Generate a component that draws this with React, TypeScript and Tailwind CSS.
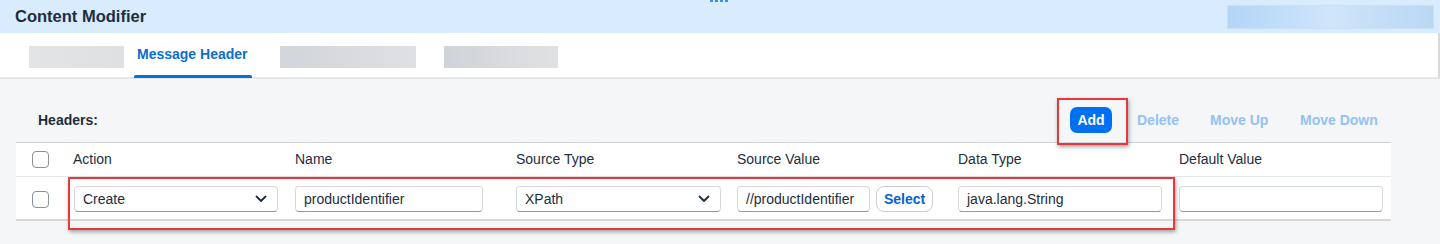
import React from "react";

function Chevron() {
  return (
    <svg width="12" height="8" viewBox="0 0 12 8" className="shrink-0">
      <path d="M1.5 1.5 L6 6 L10.5 1.5" fill="none" stroke="#1d2d3e" strokeWidth="1.8" strokeLinecap="round" strokeLinejoin="round" />
    </svg>
  );
}

function Checkbox() {
  return <div className="w-[17px] h-[17px] rounded-[4px] border border-[#89919a] bg-white" />;
}

function Field({ w, text, select }: { w: string; text?: string; select?: boolean }) {
  return (
    <div
      className={`${w} h-[26px] rounded-[4px] border border-[#d5dadd] border-b-[#8c99a6] bg-white flex items-center justify-between pl-[8px] pr-[10px] text-[14px] text-[#1d2d3e] whitespace-nowrap overflow-hidden`}
    >
      <span>{text}</span>
      {select && <Chevron />}
    </div>
  );
}

export default function App() {
  const cols = "grid grid-cols-[52px_221px_221px_221px_221px_221px_1fr]";
  return (
    <div className="relative w-[1440px] h-[244px] overflow-hidden bg-[#f5f6f7] font-['Liberation_Sans',Arial,sans-serif] text-[#1d2d3e]">
      {/* Title bar */}
      <div className="relative h-[33px] bg-[#d9ecfe] flex items-center justify-between pl-[15px] pr-[6px]">
        <span className="text-[16.5px] font-bold text-[#1d2d3e]">Content Modifier</span>
        <div className="absolute top-0 left-[710px] flex gap-[2px]">
          <div className="w-[3px] h-[2px] bg-[#3b8fe8]" />
          <div className="w-[3px] h-[2px] bg-[#3b8fe8]" />
          <div className="w-[3px] h-[2px] bg-[#3b8fe8]" />
          <div className="w-[3px] h-[2px] bg-[#3b8fe8]" />
        </div>
        <div className="w-[207px] h-[24px] bg-gradient-to-r from-[#b3d5f6] via-[#cfe5fa] to-[#bad7f2] border border-[#c6e0f8]" />
      </div>

      {/* Tabs */}
      <div className="h-[46px] bg-white border-b-2 border-[#e4e6e8] border-r-2 border-r-[#d8dadc] flex items-stretch">
        <div className="ml-[29px] mt-[13px] w-[95px] h-[22px] bg-gradient-to-r from-[#e3e4e6] to-[#dfe0e2]" />
        <div className="relative ml-[10px] w-[118px] flex items-center pl-[3px] pb-[2px]">
          <span className="text-[14px] font-bold text-[#0a6ed1] whitespace-nowrap">Message Header</span>
          <div className="absolute left-0 right-0 bottom-[-1px] h-[3px] rounded-t-[2px] bg-[#0a6ed1]" />
        </div>
        <div className="ml-[28px] mt-[13px] w-[136px] h-[22px] bg-gradient-to-r from-[#d2d5d9] to-[#dfe0e3]" />
        <div className="ml-[28px] mt-[13px] w-[114px] h-[22px] bg-gradient-to-r from-[#d0d3d7] to-[#e0e1e3]" />
      </div>

      {/* Toolbar */}
      <div className="ml-[16px] w-[1375px] mt-[28px] h-[26px] flex items-center justify-between pl-[22px] pr-[16px]">
        <span className="text-[14px] font-bold">Headers:</span>
        <div className="flex items-center">
          <div className="w-[42px] h-[26px] rounded-[7px] bg-[#0070f2] text-white text-[14px] font-bold flex items-center justify-center">Add</div>
          <span className="ml-[25px] w-[40px] whitespace-nowrap text-[14px] font-bold text-[#93c2f6]">Delete</span>
          <span className="ml-[33px] w-[57px] whitespace-nowrap text-[14px] font-bold text-[#93c2f6]">Move Up</span>
          <span className="ml-[33px] w-[75px] whitespace-nowrap text-[14px] font-bold text-[#93c2f6]">Move Down</span>
        </div>
      </div>

      {/* Table */}
      <div className="ml-[16px] mt-[9px] w-[1375px] bg-white border-t border-[#d1d5d9] border-b-2 border-b-[#d5d9dc]">
        <div className={`${cols} h-[34px] items-center border-b border-[#e5e7e9] text-[14px]`}>
          <div className="pl-[16px] flex items-center"><Checkbox /></div>
          <div className="pl-[5px]">Action</div>
          <div className="pl-[6px]">Name</div>
          <div className="pl-[6px]">Source Type</div>
          <div className="pl-[6px]">Source Value</div>
          <div className="pl-[6px]">Data Type</div>
          <div className="pl-[6px]">Default Value</div>
        </div>
        <div className={`${cols} h-[42px] items-center pt-[2px]`}>
          <div className="pl-[16px] flex items-center"><Checkbox /></div>
          <div className="pl-[6px]"><Field w="w-[204px]" text="Create" select /></div>
          <div className="pl-[6px]"><Field w="w-[188px]" text="productIdentifier" /></div>
          <div className="pl-[6px]"><Field w="w-[205px]" text="XPath" select /></div>
          <div className="pl-[6px] flex items-center gap-[6px]">
            <Field w="w-[133px]" text="//productIdentifier" />
            <div className="w-[57px] h-[26px] rounded-[8px] border border-[#c9ced3] bg-white flex items-center justify-center text-[14px] font-bold text-[#0064d9]">Select</div>
          </div>
          <div className="pl-[6px]"><Field w="w-[204px]" text="java.lang.String" /></div>
          <div className="pl-[6px]"><Field w="w-[204px]" /></div>
        </div>
      </div>

      {/* Red highlight boxes */}
      <div className="absolute left-[1057px] top-[98px] w-[71px] h-[47px] border-2 border-[#e8383d] shadow-[1px_2px_4px_rgba(0,0,0,0.35)]" />
      <div className="absolute left-[68px] top-[177px] w-[1107px] h-[53px] border-2 border-[#e8383d] shadow-[1px_2px_4px_rgba(0,0,0,0.35)]" />
    </div>
  );
}
